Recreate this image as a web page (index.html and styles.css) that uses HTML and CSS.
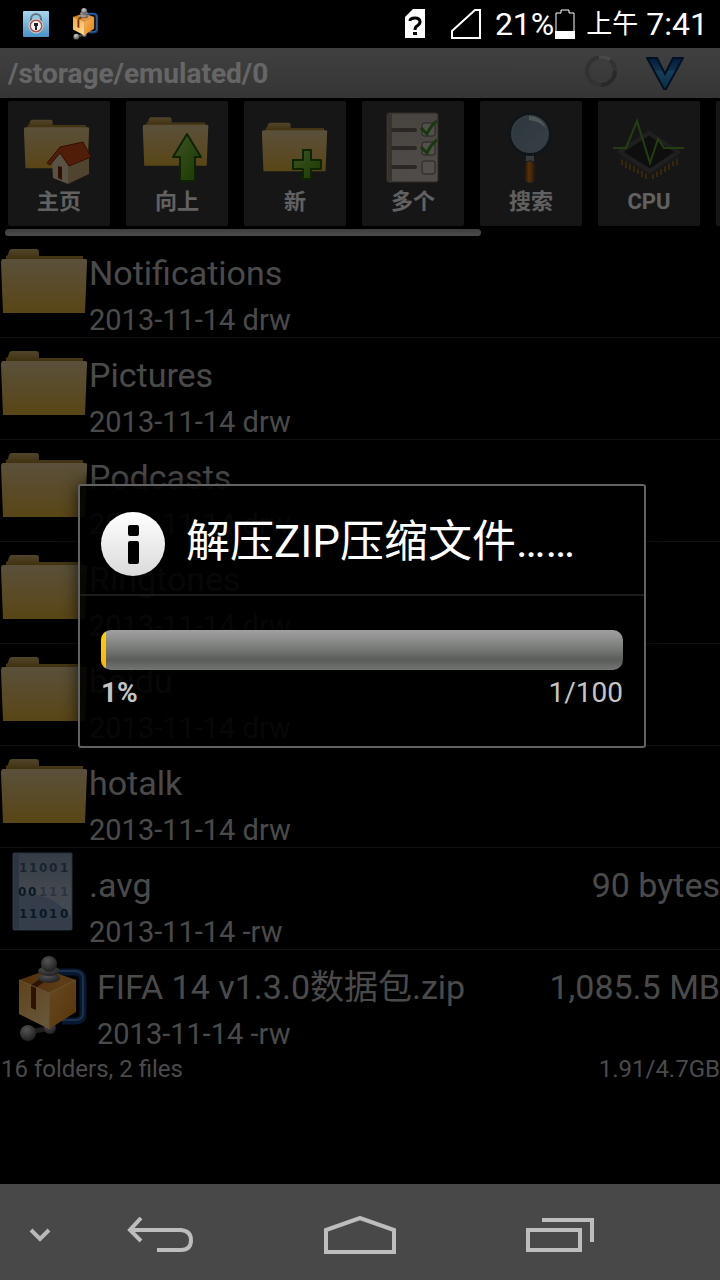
FILE: index.html
```html
<!DOCTYPE html>
<html lang="zh-CN">
<head>
<meta charset="utf-8">
<meta name="viewport" content="width=device-width, initial-scale=1">
<title>/storage/emulated/0</title>
<link rel="stylesheet" href="styles.css">
</head>
<body>
<svg class="defs" width="0" height="0" aria-hidden="true">
  <defs>
    <linearGradient id="folderFront" x1="0" y1="0" x2="0" y2="1"><stop offset="0" stop-color="#e2c893"/><stop offset="1" stop-color="#dfae38"/></linearGradient>
    <linearGradient id="folderBack" x1="0" y1="0" x2="0" y2="1"><stop offset="0" stop-color="#c8ab6c"/><stop offset="1" stop-color="#9c7519"/></linearGradient>
    <linearGradient id="boxTop" x1="0" y1="0" x2="1" y2="0"><stop offset="0" stop-color="#c9781c"/><stop offset="1" stop-color="#f0a040"/></linearGradient>
    <linearGradient id="boxLeft" x1="0" y1="0" x2="0.6" y2="1"><stop offset="0" stop-color="#f0a545"/><stop offset="1" stop-color="#ffd68c"/></linearGradient>
    <linearGradient id="boxRight" x1="0" y1="0" x2="1" y2="1"><stop offset="0" stop-color="#fbb659"/><stop offset="1" stop-color="#de8412"/></linearGradient>
    <radialGradient id="metal" cx="0.4" cy="0.3" r="0.8"><stop offset="0" stop-color="#d0d0d0"/><stop offset="1" stop-color="#404040"/></radialGradient>
    <linearGradient id="green" x1="0" y1="0" x2="1" y2="1"><stop offset="0" stop-color="#9bd05c"/><stop offset="1" stop-color="#3f8f00"/></linearGradient>
    <linearGradient id="wood" x1="0" y1="0" x2="1" y2="0"><stop offset="0" stop-color="#6e3908"/><stop offset="0.4" stop-color="#d47b1c"/><stop offset="1" stop-color="#6e3908"/></linearGradient>
    <linearGradient id="glass" x1="0" y1="0" x2="1" y2="1"><stop offset="0" stop-color="#6d8798"/><stop offset="1" stop-color="#8ba2b0"/></linearGradient>
    <linearGradient id="paper" x1="0" y1="0" x2="0" y2="1"><stop offset="0" stop-color="#b3a9a0"/><stop offset="1" stop-color="#c8bfb7"/></linearGradient>
    <linearGradient id="doc" x1="0" y1="0" x2="0" y2="1"><stop offset="0" stop-color="#8497ae"/><stop offset="0.5" stop-color="#a9b5c4"/><stop offset="1" stop-color="#a5b8d1"/></linearGradient>
    <linearGradient id="vee" x1="0" y1="0" x2="0" y2="1"><stop offset="0" stop-color="#0a4896"/><stop offset="0.4" stop-color="#2a78bd"/><stop offset="0.42" stop-color="#3e9ddc"/><stop offset="1" stop-color="#1d70ae"/></linearGradient>
    <linearGradient id="info" x1="0" y1="0" x2="0" y2="1"><stop offset="0" stop-color="#ffffff"/><stop offset="1" stop-color="#dadada"/></linearGradient>
    <linearGradient id="lock" x1="0" y1="0" x2="0" y2="1"><stop offset="0" stop-color="#a8d6ee"/><stop offset="1" stop-color="#4793c8"/></linearGradient>
    <symbol id="folder" viewBox="0 0 88 66">
      <path d="M6 11V8L8 7L9 3Q10 1 12 1H36Q39 1 39 4V8H83V13H6Z" fill="url(#folderBack)"/>
      <path d="M3 11H85Q88 11 87 15L85 65H3L1 15Q1 11 3 11Z" fill="url(#folderFront)"/>
    </symbol>
    <symbol id="archive" viewBox="0 0 70 86">
      <path d="M36 16H56Q64 16 64 25V57Q64 65 56 65H43" fill="none" stroke="#143e78" stroke-width="7"/>
      <path d="M36 15H56Q64 15 64 24V57Q64 64 56 64H43" fill="none" stroke="#4478b6" stroke-width="2"/>
      <path d="M8 76L34 72" stroke="#4b4b4b" stroke-width="5"/>
      <circle cx="31" cy="72" r="6" fill="url(#metal)"/>
      <circle cx="9" cy="77" r="8" fill="url(#metal)"/>
      <path d="M0 24L28 14L57 24L30 37Z" fill="url(#boxTop)"/>
      <path d="M0 24L30 37V73L0 58Z" fill="url(#boxLeft)"/>
      <path d="M30 37L57 24V56L30 73Z" fill="url(#boxRight)"/>
      <path d="M12 29L25 20L30 22L17 32V54L12 52Z" fill="#713008"/>
      <path d="M0 24L30 37L57 24M30 37V73" fill="none" stroke="#ffd18c" stroke-width="1"/>
      <ellipse cx="30" cy="22" rx="11" ry="5" fill="url(#metal)"/>
      <ellipse cx="30" cy="15" rx="11" ry="5" fill="url(#metal)"/>
      <circle cx="30" cy="8" r="8" fill="url(#metal)"/>
    </symbol>
  </defs>
</svg>

<header class="status">
  <div class="status-left">
    <svg width="28" height="28" viewBox="0 0 28 28" role="img" aria-label="锁">
      <rect x="1" y="1" width="26" height="26" rx="1" fill="url(#lock)"/>
      <path d="M9 11V9a5 5 0 0 1 10 0v2" fill="none" stroke="#66737c" stroke-width="2"/>
      <circle cx="14" cy="16" r="6" fill="#f5eeee" stroke="#a15a50" stroke-width="2"/>
      <circle cx="14" cy="16" r="7" fill="none" stroke="#ddd2cf" stroke-width="1"/>
      <path d="M12 13h4v3h-1v4h-2v-4h-1Z" fill="#222"/>
    </svg>
    <svg width="26" height="32" role="img" aria-label="解压"><use href="#archive"/></svg>
  </div>
  <div class="status-right">
    <svg class="sim" width="20" height="30" viewBox="0 0 20 30" role="img" aria-label="SIM">
      <path d="M8 0H20V29H0V8Z" fill="#fff"/>
      <path d="M5 12Q5 9 10 9Q15 9 15 13Q15 15 12 17Q10 18 10 21" fill="none" stroke="#000" stroke-width="3"/>
      <rect x="8" y="23" width="4" height="3"/>
    </svg>
    <svg class="signal" width="30" height="30" viewBox="0 0 30 30" role="img" aria-label="信号">
      <path d="M1 29V22L24 1H29V29Z" fill="none" stroke="#fff" stroke-width="2"/>
    </svg>
    <span>21%</span>
    <svg class="battery" width="20" height="30" viewBox="0 0 20 30" role="img" aria-label="电池">
      <path d="M1 29V4H6V1H14V4H19V29Z" fill="none" stroke="#fff" stroke-width="1"/>
      <rect x="0" y="22" width="20" height="8" fill="#fff"/>
    </svg>
    <span class="ampm">上午</span>
    <time>7:41</time>
  </div>
</header>

<main class="app">
  <div class="pathbar">
    <h1>/storage/emulated/0</h1>
    <svg width="34" height="34" viewBox="0 0 34 34" aria-hidden="true">
      <circle cx="17" cy="15" r="14" fill="none" stroke="#7d7d7d" stroke-width="4"/>
      <path d="M31 15A14 14 0 0 1 17 29" fill="none" stroke="#686868" stroke-width="4"/>
      <path d="M15 1Q21 0 26 4" fill="none" stroke="#b4b4b4" stroke-width="4"/>
    </svg>
    <button class="plain" type="button" aria-label="菜单">
      <svg width="38" height="34" viewBox="0 0 38 34"><path d="M1 2H11L19 18L27 2H37L20 33H18Z" fill="url(#vee)" stroke="#062a58" stroke-width="2"/></svg>
    </button>
  </div>

  <div class="toolbar">
    <button type="button" class="tile">
      <svg viewBox="0 0 102 84">
        <use href="#folder" x="15" y="18" width="67" height="50"/>
        <path d="M44 56L61 76L81 68V51L60 44Z" fill="#e4c995"/>
        <path d="M44 60L51 51L60 64V83L45 77Z" fill="#e0cca6"/>
        <path d="M60 64L81 55V73L60 83Z" fill="#c9a977"/>
        <path d="M50 65L54 66V79L50 77Z" fill="#7b260b"/>
        <path d="M39 62L52 46L75 41L83 56L61 65L52 52L42 64Z" fill="#c94a17" stroke="#7d260a" stroke-width="1"/>
      </svg>
      <span>主页</span>
    </button>
    <button type="button" class="tile">
      <svg viewBox="0 0 102 84">
        <use href="#folder" x="16" y="15" width="67" height="51"/>
        <path d="M61 33L75 56H69V80H54V56H47Z" fill="url(#green)" stroke="#22580c" stroke-width="2" stroke-linejoin="round"/>
      </svg>
      <span>向上</span>
    </button>
    <button type="button" class="tile">
      <svg viewBox="0 0 102 84">
        <use href="#folder" x="17" y="21" width="67" height="50"/>
        <path d="M59 49H67V59H77V68H67V78H59V68H49V59H59Z" fill="url(#green)" stroke="#225c04" stroke-width="2" stroke-linejoin="round"/>
      </svg>
      <span>新</span>
    </button>
    <button type="button" class="tile">
      <svg viewBox="0 0 102 84">
        <rect x="25" y="12" width="51" height="69" rx="2" fill="url(#paper)" stroke="#77685c"/>
        <rect x="26" y="13" width="4" height="67" fill="#8d7d70"/>
        <path d="M31 29H53M31 47H53M31 66H53" stroke="#726258" stroke-width="4" stroke-linecap="round"/>
        <g fill="#cdc6c1" stroke="#5f5953"><rect x="60" y="22" width="13" height="13" rx="2"/><rect x="60" y="41" width="13" height="13" rx="2"/><rect x="60" y="60" width="13" height="13" rx="2"/></g>
        <path d="M59 27L65 33Q69 24 75 20M59 46L65 52Q69 43 75 39" fill="none" stroke="#3b8c25" stroke-width="3"/>
      </svg>
      <span>多个</span>
    </button>
    <button type="button" class="tile">
      <svg viewBox="0 0 102 84">
        <rect x="46" y="52" width="8" height="14" fill="#8b8f92"/>
        <rect x="45" y="60" width="10" height="22" rx="4" fill="url(#wood)" stroke="#34464f" stroke-width="1"/>
        <circle cx="50" cy="33" r="20" fill="url(#glass)" stroke="#27363f" stroke-width="4"/>
        <circle cx="50" cy="33" r="18" fill="none" stroke="#8397a4" stroke-width="2"/>
        <path d="M49 15Q61 15 66 27Q59 20 49 19Z" fill="#cad7df"/>
      </svg>
      <span>搜索</span>
    </button>
    <button type="button" class="tile">
      <svg viewBox="0 0 102 84">
        <g transform="translate(0 -4)">
          <path d="M24 56v12M28 59v12M32 61v12M36 63v12M40 65v12M44 68v12M48 70v12M55 70v12M59 68v12M63 66v12M67 63v12M71 61v12M75 59v10M79 56v12" stroke="#8a5f18" stroke-width="2"/>
          <path d="M22 55L52 73L80 55V61L52 79L22 61Z" fill="#3d3d3d"/>
          <path d="M22 55L51 36L80 55L52 74Z" fill="#242424" stroke="#4e4e4e" stroke-width="4"/>
          <path d="M15 51H28L39 24L52 66L60 42L66 51H86" fill="none" stroke="#5a9a28" stroke-width="2"/>
        </g>
      </svg>
      <span>CPU</span>
    </button>
    <button type="button" class="tile" aria-label="更多"></button>
  </div>
  <div class="scroll"><div class="thumb"></div></div>

  <ul class="files">
    <li><svg class="icon" viewBox="0 0 88 100"><use href="#folder" y="12" width="88" height="66"/></svg><div class="info"><div class="name"><span>Notifications</span></div><div class="meta">2013-11-14 drw</div></div></li>
    <li><svg class="icon" viewBox="0 0 88 100"><use href="#folder" y="12" width="88" height="66"/></svg><div class="info"><div class="name"><span>Pictures</span></div><div class="meta">2013-11-14 drw</div></div></li>
    <li><svg class="icon" viewBox="0 0 88 100"><use href="#folder" y="12" width="88" height="66"/></svg><div class="info"><div class="name"><span>Podcasts</span></div><div class="meta">2013-11-14 drw</div></div></li>
    <li><svg class="icon" viewBox="0 0 88 100"><use href="#folder" y="12" width="88" height="66"/></svg><div class="info"><div class="name"><span>Ringtones</span></div><div class="meta">2013-11-14 drw</div></div></li>
    <li><svg class="icon" viewBox="0 0 88 100"><use href="#folder" y="12" width="88" height="66"/></svg><div class="info"><div class="name"><span>baidu</span></div><div class="meta">2013-11-14 drw</div></div></li>
    <li><svg class="icon" viewBox="0 0 88 100"><use href="#folder" y="12" width="88" height="66"/></svg><div class="info"><div class="name"><span>hotalk</span></div><div class="meta">2013-11-14 drw</div></div></li>
    <li>
      <svg class="icon" viewBox="0 0 88 100">
        <rect x="13" y="5" width="59" height="77" rx="1" fill="url(#doc)" stroke="#637b99"/>
        <rect x="14" y="6" width="5" height="75" fill="#6f87a6"/>
        <path d="M19 46Q52 43 72 70V81H19Z" fill="#8299b7"/>
        <g class="bits"><text x="19 29 39 49 60" y="24" opacity=".7">11001</text><text x="18 28" y="48">00</text><text x="39 49 60" y="48" opacity=".4">111</text><text x="19 29 39 49 60" y="70">11010</text></g>
      </svg>
      <div class="info"><div class="name"><span>.avg</span><span>90 bytes</span></div><div class="meta">2013-11-14 -rw</div></div>
    </li>
    <li>
      <svg class="icon wide" viewBox="0 0 96 100"><use href="#archive" x="19" y="6" width="70" height="86"/></svg>
      <div class="info"><div class="name"><span>FIFA 14 v1.3.0数据包.zip</span><span>1,085.5 MB</span></div><div class="meta">2013-11-14 -rw</div></div>
    </li>
  </ul>
  <div class="summary"><span>16 folders, 2 files</span><span>1.91/4.7GB</span></div>

  <div class="overlay">
    <section class="dialog" role="dialog" aria-modal="true" aria-labelledby="dialog-title">
      <div class="dialog-head">
        <svg width="64" height="64" viewBox="0 0 64 64" aria-hidden="true">
          <circle cx="32" cy="32" r="32" fill="url(#info)"/>
          <rect x="27" y="13" width="11" height="11" rx="2" fill="#000"/>
          <rect x="27" y="29" width="11" height="23" rx="2" fill="#000"/>
        </svg>
        <h2 id="dialog-title">解压ZIP压缩文件……</h2>
      </div>
      <div class="dialog-body">
        <progress value="1" max="100" aria-labelledby="dialog-title">1%</progress>
        <div class="counts"><strong>1%</strong><span>1/100</span></div>
      </div>
    </section>
  </div>
</main>

<nav class="navbar">
  <button class="plain" type="button" aria-label="隐藏"><svg width="22" height="16" viewBox="0 0 22 16"><path d="M2 3L11 12L20 3" fill="none" stroke="#b9b9b9" stroke-width="4"/></svg></button>
  <button class="plain" type="button" aria-label="返回"><svg width="66" height="36" viewBox="0 0 66 36"><path d="M14 1L3 13L14 24M3 13H54Q64 14 64 23Q64 33 54 33H30" fill="none" stroke="#bdbdbd" stroke-width="4"/></svg></button>
  <button class="plain" type="button" aria-label="主屏幕"><svg width="72" height="38" viewBox="0 0 72 38"><path d="M2 36V14L36 2L70 14V36Z" fill="none" stroke="#bdbdbd" stroke-width="4"/></svg></button>
  <button class="plain" type="button" aria-label="最近任务"><svg width="68" height="36" viewBox="0 0 68 36"><path d="M2 13H54V33H2ZM16 3H66V25" fill="none" stroke="#bdbdbd" stroke-width="4"/></svg></button>
</nav>
</body>
</html>
```
FILE: styles.css
```css
* { box-sizing: border-box; }

body {
  margin: 0;
  min-height: 100vh;
  display: flex;
  flex-direction: column;
  background: #000;
  color: #fff;
  font-family: Roboto, "Noto Sans CJK SC", sans-serif;
}

.defs { position: absolute; }
svg { display: block; flex: none; }
h1, h2 { margin: 0; }

.plain {
  padding: 0;
  border: 0;
  background: none;
}

.status {
  height: 48px;
  padding: 0 12px 0 22px;
  display: flex;
  align-items: center;
  justify-content: space-between;
  font-size: 32px;
}
.status-left, .status-right { display: flex; align-items: center; }
.status-left { gap: 23px; }
.sim { margin-right: 26px; }
.signal { margin-right: 14px; }
.battery { margin: 0 11px 0 1px; }
.ampm { margin-right: 8px; font-size: 26px; line-height: 32px; }

.app {
  position: relative;
  flex: 1;
}

.pathbar {
  height: 50px;
  padding: 0 36px 0 8px;
  display: flex;
  align-items: center;
  gap: 28px;
  background: linear-gradient(#a0a0a0, #858585);
}
.pathbar h1 {
  flex: 1;
  font-size: 28px;
  font-weight: 700;
}

.toolbar {
  padding: 3px 0 3px 8px;
  display: flex;
  gap: 16px;
  overflow: hidden;
}
.tile {
  flex: none;
  width: 102px;
  height: 125px;
  padding: 0 0 8px;
  border: 0;
  border-radius: 2px;
  background: #383838;
  color: #f2f2f2;
  font: 700 22px/33px Roboto, "Noto Sans CJK SC", sans-serif;
}
.tile span { display: block; }

.scroll { padding: 0 5px; }
.thumb {
  width: 67%;
  height: 7px;
  border-radius: 4px;
  background: linear-gradient(#9a9a9a, #bdbdbd);
}

.files {
  margin: 0;
  padding: 0;
  list-style: none;
  color: #bababa;
}
.files li {
  height: 102px;
  display: flex;
  border-bottom: 1px solid #2a2a2a;
}
.files li:last-child { border-bottom-color: transparent; }
.icon { width: 88px; height: 100px; }
.icon.wide { width: 96px; }
.bits {
  fill: #163e5c;
  font: 700 12px "DejaVu Sans", sans-serif;
}
.info { flex: 1; padding-left: 1px; }
.name {
  display: flex;
  justify-content: space-between;
  font-size: 34px;
  line-height: 74px;
}
.meta { font-size: 29px; line-height: 20px; }

.summary {
  padding: 0 0 0 1px;
  display: flex;
  justify-content: space-between;
  color: #bababa;
  font-size: 24px;
  line-height: 34px;
}

.overlay {
  position: absolute;
  inset: 0;
  padding-left: 4px;
  display: flex;
  align-items: center;
  justify-content: center;
  background: rgba(0, 0, 0, 0.6);
}
.dialog {
  width: 568px;
  max-width: 92%;
  border: 2px solid #626262;
  border-radius: 3px;
  background: rgba(0, 0, 0, 0.9);
  box-shadow: 0 0 16px rgba(0, 0, 0, 0.7);
}
.dialog-head {
  padding: 26px 21px 18px;
  display: flex;
  align-items: flex-start;
  gap: 21px;
  border-bottom: 2px solid #1c1c1c;
}
.dialog-head h2 {
  font-size: 44px;
  font-weight: 400;
  line-height: 60px;
}
.dialog-body { padding: 34px 21px 35px; }

progress {
  appearance: none;
  display: block;
  width: 100%;
  height: 40px;
  border: 0;
  border-radius: 10px;
  overflow: hidden;
}
progress::-webkit-progress-bar {
  background: linear-gradient(#a0a0a0, #7d807d 40%, #595c58 75%, #737573);
}
progress::-webkit-progress-value { background: linear-gradient(#ffd000, #ffb400); }

.counts {
  padding-top: 5px;
  display: flex;
  justify-content: space-between;
  color: #c4c4c4;
  font-size: 28px;
  line-height: 36px;
}

.navbar {
  height: 96px;
  padding-top: 5px;
  display: grid;
  grid-template-columns: 1fr 2fr 3fr 2fr 1fr;
  place-items: center;
  background: #484849;
}
```
